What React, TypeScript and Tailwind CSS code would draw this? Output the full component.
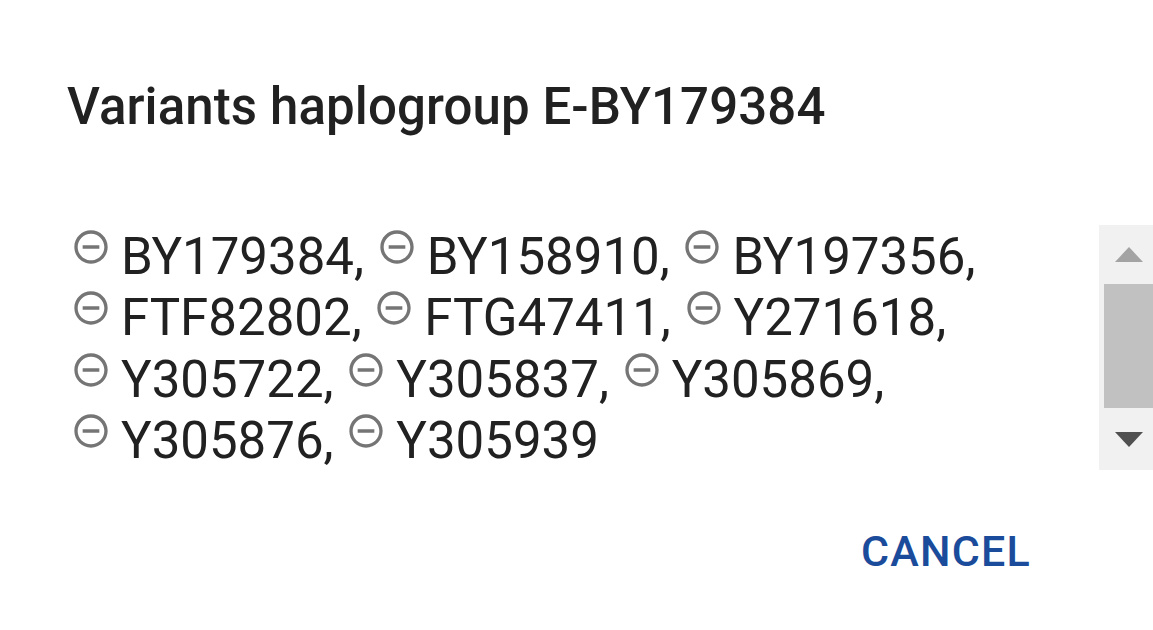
const variants = [
  'BY179384',
  'BY158910',
  'BY197356',
  'FTF82802',
  'FTG47411',
  'Y271618',
  'Y305722',
  'Y305837',
  'Y305869',
  'Y305876',
  'Y305939',
];

function RemoveCircleIcon() {
  return (
    <svg
      viewBox="0 0 24 24"
      width="40"
      height="40"
      className="mr-[10px] mt-[1px] inline-block align-top"
      fill="#757575"
      aria-hidden="true"
    >
      <path d="M7 11v2h10v-2H7zm5-9C6.48 2 2 6.48 2 12s4.48 10 10 10 10-4.48 10-10S17.52 2 12 2zm0 18c-4.41 0-8-3.59-8-8s3.59-8 8-8 8 3.59 8 8-3.59 8-8 8z" />
    </svg>
  );
}

function Scrollbar() {
  return (
    <div className="flex w-[60px] shrink-0 flex-col bg-[#f1f1f1]">
      <div className="flex h-[59px] items-center justify-center">
        <svg width="28" height="15" viewBox="0 0 28 15" aria-hidden="true">
          <polygon points="14,0 28,15 0,15" fill="#a3a3a3" />
        </svg>
      </div>
      <div className="ml-[5px] mr-[5px] h-[124px] bg-[#c1c1c1]" />
      <div className="flex flex-1 items-center justify-center">
        <svg width="28" height="15" viewBox="0 0 28 15" aria-hidden="true">
          <polygon points="0,0 28,0 14,15" fill="#505050" />
        </svg>
      </div>
    </div>
  );
}

export default function App() {
  return (
    <div className="h-[630px] w-[1153px] overflow-hidden bg-white font-['Roboto',sans-serif] text-[#212121]">
      <h2 className="pl-[67px] pt-[81px] text-[51px] font-medium leading-[51px] tracking-[0.1px]">
        Variants haplogroup E-BY179384
      </h2>

      <div className="mt-[93px] flex h-[245px]">
        <div className="w-[1099px] shrink-0 overflow-hidden pl-[71px] pr-[40px] pt-[1px] text-[51px] leading-[61.3px]">
          {variants.map((v, i) => (
            <span key={v}>
              <span className="whitespace-nowrap">
                <RemoveCircleIcon />
                {v}
                {i < variants.length - 1 ? ',' : ''}
              </span>{' '}
            </span>
          ))}
        </div>
        <Scrollbar />
      </div>

      <div className="mt-[60px] flex justify-end pr-[122px]">
        <button className="text-[43px] font-medium uppercase leading-[43px] tracking-[0.02857em] text-[#1b4b9b]">
          Cancel
        </button>
      </div>
    </div>
  );
}
